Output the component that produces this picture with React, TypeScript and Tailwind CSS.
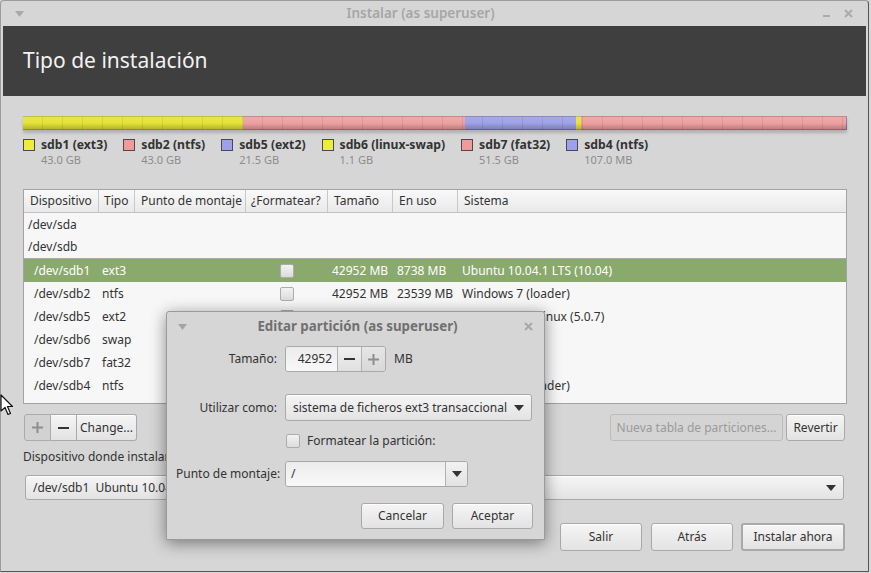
import React from "react";

type Part = { dev: string; type: string; size: string; used: string; sys: string; selected?: boolean };

const parts: Part[] = [
  { dev: "/dev/sdb1", type: "ext3", size: "42952 MB", used: "8738 MB", sys: "Ubuntu 10.04.1 LTS (10.04)", selected: true },
  { dev: "/dev/sdb2", type: "ntfs", size: "42952 MB", used: "23539 MB", sys: "Windows 7 (loader)" },
  { dev: "/dev/sdb5", type: "ext2", size: "21474 MB", used: "4211 MB", sys: "Debian GNU/Linux (5.0.7)" },
  { dev: "/dev/sdb6", type: "swap", size: "1098 MB", used: "", sys: "" },
  { dev: "/dev/sdb7", type: "fat32", size: "51539 MB", used: "30112 MB", sys: "" },
  { dev: "/dev/sdb4", type: "ntfs", size: "107 MB", used: "34 MB", sys: "Windows 7 (loader)" },
];

const legend = [
  { name: "sdb1 (ext3)", size: "43.0 GB", color: "bg-[#eded3e]" },
  { name: "sdb2 (ntfs)", size: "43.0 GB", color: "bg-[#f09a9a]" },
  { name: "sdb5 (ext2)", size: "21.5 GB", color: "bg-[#9da1ec]" },
  { name: "sdb6 (linux-swap)", size: "1.1 GB", color: "bg-[#eded3e]" },
  { name: "sdb7 (fat32)", size: "51.5 GB", color: "bg-[#f09a9a]" },
  { name: "sdb4 (ntfs)", size: "107.0 MB", color: "bg-[#9da1ec]" },
];

function Btn({ children, className = "" }: { children?: React.ReactNode; className?: string }) {
  return (
    <div
      className={`flex items-center justify-center rounded-[3px] border border-[#a9a9a9] bg-linear-to-b from-[#f5f5f5] to-[#e3e3e3] text-[12px] text-[#333] shadow-[inset_0_1px_0_rgba(255,255,255,0.9)] ${className}`}
    >
      {children}
    </div>
  );
}

function Arrow() {
  return (
    <svg width="10" height="6" viewBox="0 0 10 6">
      <path d="M0 0 L10 0 L5 6 Z" fill="#333" />
    </svg>
  );
}

function Check({ className = "" }: { className?: string }) {
  return (
    <div
      className={`w-[14px] h-[14px] rounded-[2px] border border-[#acacac] bg-linear-to-b from-[#f2f2f2] to-[#dcdcdc] ${className}`}
    />
  );
}

function Cell({ w, children, className = "" }: { w: string; children?: React.ReactNode; className?: string }) {
  return <div className={`${w} shrink-0 flex items-center whitespace-nowrap overflow-hidden ${className}`}>{children}</div>;
}

export default function App() {
  return (
    <div className="relative w-[871px] h-[573px] overflow-hidden bg-[#d6d6d6] font-['Noto_Sans','DejaVu_Sans',sans-serif]">
      <div className="w-[869px] h-[572px] flex flex-col rounded-t-[4px] border-t border-l border-[#9c9c9c] border-r border-r-[#555] border-b border-b-[#555] bg-[#d6d6d6]">
        {/* title bar */}
        <div className="h-[25px] shrink-0 flex items-center justify-between pl-[14px] pr-[15px]">
          <svg width="9" height="6" viewBox="0 0 9 6">
            <path d="M0 0 L9 0 L4.5 6 Z" fill="#a9a9a9" />
          </svg>
          <div className="text-[13.5px] font-semibold text-[#a6a6a6] pr-[6px]">Instalar (as superuser)</div>
          <div className="flex items-center gap-[14px] text-[#a8a8a8]">
            <div className="w-[7px] h-[2px] bg-[#ababab] mt-[4px]" />
            <svg width="9" height="9" viewBox="0 0 9 9">
              <path d="M1 1 L8 8 M8 1 L1 8" stroke="#ababab" strokeWidth="2" />
            </svg>
          </div>
        </div>

        {/* dark header */}
        <div className="mx-[2px] h-[70px] shrink-0 bg-[#3f3f3f] flex items-center pl-[20px]">
          <span className="text-[21px] text-[#f2f2f2]">Tipo de instalación</span>
        </div>

        <div className="flex flex-col px-[22px] pt-[20px]">
          {/* partition bar */}
          <div className="relative h-[14px] w-[824px] flex shadow-[0_3px_3px_rgba(0,0,0,0.18)]">
            <div className="w-[220px] bg-[#e4e43a] border-y border-[#b9b92e]" />
            <div className="w-[222px] bg-[#eea1a1] border-y border-[#c08080]" />
            <div className="w-[111px] bg-[#9fa2e6] border-y border-[#7d80b8]" />
            <div className="w-[5px] bg-[#e4e43a] border-y border-[#b9b92e]" />
            <div className="w-[266px] bg-[#eea1a1] border-y border-[#c08080] border-r border-r-[#8080b0]" />
            <div className="absolute inset-0 bg-[image:repeating-linear-gradient(90deg,transparent_0px,transparent_19px,rgba(0,0,0,0.08)_19px,rgba(0,0,0,0.08)_20px)]" />
            <div className="absolute inset-0 bg-linear-to-b from-white/10 via-transparent to-black/25" />
          </div>

          {/* legend */}
          <div className="flex gap-[16px] mt-[7px]">
            {legend.map((l) => (
              <div key={l.name} className="flex flex-col">
                <div className="h-[16px] flex items-center gap-[6px]">
                  <div className={`w-[12px] h-[12px] border border-[#4a4a4a] ${l.color}`} />
                  <span className="text-[12.2px] font-bold text-[#333] leading-none">{l.name}</span>
                </div>
                <div className="h-[14px] pl-[18px] text-[11px] text-[#8c8c8c] flex items-center">{l.size}</div>
              </div>
            ))}
          </div>

          {/* table */}
          <div className="mt-[22px] w-[824px] h-[215px] border border-[#a3a3a3] bg-[#f7f7f7] flex flex-col text-[12px] text-[#333]">
            <div className="h-[23px] shrink-0 flex bg-linear-to-b from-[#f9f9f9] to-[#e9e9e9] border-b border-[#c2c2c2]">
              <Cell w="w-[75px]" className="px-[6px] border-r border-[#c8c8c8]">Dispositivo</Cell>
              <Cell w="w-[36px]" className="px-[5px] border-r border-[#c8c8c8]">Tipo</Cell>
              <Cell w="w-[111px]" className="px-[6px] border-r border-[#c8c8c8]">Punto de montaje</Cell>
              <Cell w="w-[82px]" className="px-[5px] border-r border-[#c8c8c8]">¿Formatear?</Cell>
              <Cell w="w-[65px]" className="px-[6px] border-r border-[#c8c8c8]">Tamaño</Cell>
              <Cell w="w-[65px]" className="px-[6px] border-r border-[#c8c8c8]">En uso</Cell>
              <Cell w="flex-1" className="px-[6px]">Sistema</Cell>
            </div>
            <div className="h-[23px] flex items-center pl-[4px]">/dev/sda</div>
            <div className="h-[23px] flex items-center pl-[4px] border-b border-[#a9a9a9]">/dev/sdb</div>
            {parts.map((p) => (
              <div
                key={p.dev}
                className={`h-[23px] shrink-0 flex ${p.selected ? "bg-[#89a96d] text-white" : ""}`}
              >
                <Cell w="w-[75px]" className="pl-[10px]">{p.dev}</Cell>
                <Cell w="w-[36px]" className="pl-[3px]">{p.type}</Cell>
                <Cell w="w-[111px]" />
                <Cell w="w-[82px]" className="justify-center pr-[1px]">
                  <Check />
                </Cell>
                <Cell w="w-[65px]" className="pl-[4px]">{p.size}</Cell>
                <Cell w="w-[65px]" className="pl-[4px]">{p.used}</Cell>
                <Cell w="flex-1" className="pl-[4px]">{p.sys}</Cell>
              </div>
            ))}
          </div>

          {/* table buttons */}
          <div className="mt-[10px] h-[27px] flex justify-between">
            <div className="flex ml-[1px]">
              <div className="w-[27px] flex items-center justify-center rounded-l-[3px] border border-[#ababab] bg-[#d2d2d2]">
                <svg width="11" height="11" viewBox="0 0 11 11">
                  <path d="M5.5 0 V11 M0 5.5 H11" stroke="#8e8e8e" strokeWidth="2" />
                </svg>
              </div>
              <Btn className="w-[26px] rounded-none border-l-0">
                <div className="w-[11px] h-[2px] bg-[#333]" />
              </Btn>
              <Btn className="w-[60px] rounded-l-none border-l-0">Change...</Btn>
            </div>
            <div className="flex gap-[3px] mr-[1px]">
              <div className="w-[173px] flex items-center justify-center rounded-[3px] border border-[#bcbcbc] bg-[#d4d4d4] text-[12px] text-[#9a9a9a]">
                Nueva tabla de particiones...
              </div>
              <Btn className="w-[59px]">Revertir</Btn>
            </div>
          </div>

          <div className="mt-[8px] h-[16px] flex items-center text-[12px] text-[#333]">
            Dispositivo donde instalar el cargador de arranque:
          </div>

          <Btn className="mt-[10px] mx-[2px] h-[25px] !justify-between px-[7px]">
            <span>/dev/sdb1&nbsp;&nbsp;Ubuntu 10.04.1 LTS (10.04)</span>
            <Arrow />
          </Btn>

          <div className="mt-[23px] h-[28px] flex justify-end mr-[1px]">
            <Btn className="w-[82px]">Salir</Btn>
            <Btn className="w-[82px] ml-[9px]">Atrás</Btn>
            <Btn className="w-[104px] ml-[8px] border-2 border-[#97b97a]">Instalar ahora</Btn>
          </div>
        </div>
      </div>

      {/* dialog */}
      <div className="absolute left-[166px] top-[311px] w-[379px] h-[229px] flex flex-col rounded-t-[3px] border border-[#9a9a9a] bg-[#d6d6d6] shadow-[0_3px_16px_rgba(0,0,0,0.45)] text-[12px] text-[#333]">
        <div className="h-[29px] shrink-0 flex items-center justify-between px-[11px]">
          <svg width="9" height="6" viewBox="0 0 9 6">
            <path d="M0 0 L9 0 L4.5 6 Z" fill="#a4a4a4" />
          </svg>
          <div className="text-[13.3px] font-bold text-[#707070] pl-[4px]">Editar partición (as superuser)</div>
          <svg width="9" height="9" viewBox="0 0 9 9">
            <path d="M1 1 L8 8 M8 1 L1 8" stroke="#a8a8a8" strokeWidth="2" />
          </svg>
        </div>

        <div className="flex flex-col pl-[9px] pr-[11px]">
          <div className="mt-[5px] h-[26px] flex items-center">
            <div className="w-[101px] text-right">Tamaño:</div>
            <div className="ml-[8px] h-[26px] flex rounded-[3px] border border-[#a9a9a9] overflow-hidden">
              <div className="w-[51px] bg-linear-to-b from-[#ececec] to-[#f8f8f8] flex items-center justify-end pr-[5px]">42952</div>
              <div className="w-[24px] border-l border-[#b2b2b2] bg-linear-to-b from-[#f0f0f0] to-[#e0e0e0] flex items-center justify-center">
                <div className="w-[11px] h-[2px] bg-[#333]" />
              </div>
              <div className="w-[24px] border-l border-[#b2b2b2] bg-linear-to-b from-[#e6e6e6] to-[#d8d8d8] flex items-center justify-center">
                <svg width="11" height="11" viewBox="0 0 11 11">
                  <path d="M5.5 0 V11 M0 5.5 H11" stroke="#8e8e8e" strokeWidth="2" />
                </svg>
              </div>
            </div>
            <div className="ml-[8px]">MB</div>
          </div>

          <div className="mt-[22px] h-[27px] flex items-center">
            <div className="w-[101px] text-right">Utilizar como:</div>
            <Btn className="ml-[8px] w-[247px] h-[27px] !justify-between px-[7px]">
              <span className="whitespace-nowrap">sistema de ficheros ext3 transaccional</span>
              <Arrow />
            </Btn>
          </div>

          <div className="mt-[10px] h-[20px] flex items-center pl-[110px]">
            <Check />
            <span className="ml-[7px]">Formatear la partición:</span>
          </div>

          <div className="mt-[10px] h-[26px] flex items-center">
            <div className="w-[101px] text-right whitespace-nowrap">Punto de montaje:</div>
            <div className="ml-[8px] w-[183px] h-[26px] flex rounded-[3px] border border-[#a9a9a9] overflow-hidden">
              <div className="flex-1 bg-linear-to-b from-[#ececec] to-[#f8f8f8] flex items-center pl-[5px]">/</div>
              <div className="w-[22px] border-l border-[#b2b2b2] bg-linear-to-b from-[#f2f2f2] to-[#e2e2e2] flex items-center justify-center">
                <Arrow />
              </div>
            </div>
          </div>

          <div className="mt-[16px] h-[26px] flex justify-end gap-[8px]">
            <Btn className="w-[83px]">Cancelar</Btn>
            <Btn className="w-[81px]">Aceptar</Btn>
          </div>
        </div>
      </div>

      {/* mouse pointer */}
      <svg className="absolute left-0 top-[394px]" width="14" height="22" viewBox="0 0 14 22">
        <path d="M1 1 L1 17 L5 13.5 L8 20.5 L10.5 19.5 L7.5 12.5 L12.5 12.5 Z" fill="#fff" stroke="#111" strokeWidth="1.2" strokeLinejoin="round" />
      </svg>
    </div>
  );
}
